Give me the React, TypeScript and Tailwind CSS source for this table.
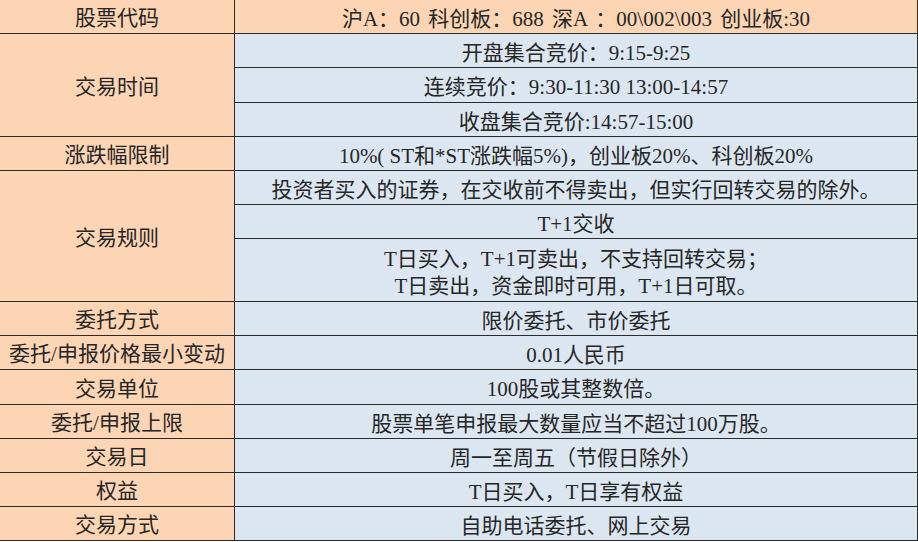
const font = { fontFamily: '"Liberation Serif", "Noto Sans CJK SC", serif' };

const orange = 'bg-[#fcd5b4]';
const blue = 'bg-[#dce6f1]';

function L({ children, span = '' }: { children: React.ReactNode; span?: string }) {
  return (
    <div className={`${orange} ${span} flex items-center justify-center border-r border-b border-[#2a2a2a] pt-[5px]`}>
      {children}
    </div>
  );
}

function R({ children, bg = blue }: { children: React.ReactNode; bg?: string }) {
  return (
    <div className={`${bg} flex flex-col items-center justify-center border-r border-b border-[#2a2a2a] pt-[5px] text-center leading-[27px]`}>
      {children}
    </div>
  );
}

export default function App() {
  return (
    <div
      style={font}
      className="grid h-[542px] w-[918px] grid-cols-[235px_683px] grid-rows-[34px_34px_35px_34px_34px_34px_34px_63px_34px_34px_35px_34px_34px_34px_34px] bg-white text-[21px] text-[#262626]"
    >
      <L>股票代码</L>
      <R bg={orange}>
        <span className="[word-spacing:3px]">{'沪A：60 科创板：688 深A ：00\\002\\003 创业板:30'}</span>
      </R>

      <L span="row-span-3">交易时间</L>
      <R>开盘集合竞价：9:15-9:25</R>
      <R>连续竞价：9:30-11:30 13:00-14:57</R>
      <R>收盘集合竞价:14:57-15:00</R>

      <L>涨跌幅限制</L>
      <R>10%( ST和*ST涨跌幅5%)，创业板20%、科创板20%</R>

      <L span="row-span-3">交易规则</L>
      <R>投资者买入的证券，在交收前不得卖出，但实行回转交易的除外。</R>
      <R>T+1交收</R>
      <R>
        <span>T日买入，T+1可卖出，不支持回转交易；</span>
        <span>T日卖出，资金即时可用，T+1日可取。</span>
      </R>

      <L>委托方式</L>
      <R>限价委托、市价委托</R>

      <L>委托/申报价格最小变动</L>
      <R>0.01人民币</R>

      <L>交易单位</L>
      <R>100股或其整数倍。</R>

      <L>委托/申报上限</L>
      <R>股票单笔申报最大数量应当不超过100万股。</R>

      <L>交易日</L>
      <R>周一至周五（节假日除外）</R>

      <L>权益</L>
      <R>T日买入，T日享有权益</R>

      <L>交易方式</L>
      <R>自助电话委托、网上交易</R>
    </div>
  );
}
